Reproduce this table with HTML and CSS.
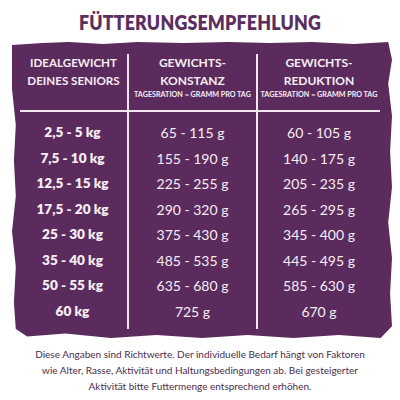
FILE: index.html
```html
<!DOCTYPE html>
<html lang="de">
<head>
  <meta charset="UTF-8">
  <title>Fütterungsempfehlung</title>
  <link rel="stylesheet" href="styles.css">
</head>
<body>
  <div class="page">
    <h1 class="title">FÜTTERUNGSEMPFEHLUNG</h1>

    <div class="panel">
      <div class="feed-table">
        <div class="head col-1">
          <span class="head-main">IDEALGEWICHT<br>DEINES SENIORS</span>
        </div>
        <div class="head col-2">
          <span class="head-main">GEWICHTS-<br>KONSTANZ</span>
          <span class="head-sub">TAGESRATION = GRAMM PRO TAG</span>
        </div>
        <div class="head col-3">
          <span class="head-main">GEWICHTS-<br>REDUKTION</span>
          <span class="head-sub">TAGESRATION = GRAMM PRO TAG</span>
        </div>

        <div class="col-1 body">
          <div class="cell weight">2,5 - 5 kg</div>
          <div class="cell weight">7,5 - 10 kg</div>
          <div class="cell weight">12,5 - 15 kg</div>
          <div class="cell weight">17,5 - 20 kg</div>
          <div class="cell weight">25 - 30 kg</div>
          <div class="cell weight">35 - 40 kg</div>
          <div class="cell weight">50 - 55 kg</div>
          <div class="cell weight">60 kg</div>
        </div>
        <div class="col-2 body">
          <div class="cell">65 - 115 g</div>
          <div class="cell">155 - 190 g</div>
          <div class="cell">225 - 255 g</div>
          <div class="cell">290 - 320 g</div>
          <div class="cell">375 - 430 g</div>
          <div class="cell">485 - 535 g</div>
          <div class="cell">635 - 680 g</div>
          <div class="cell">725 g</div>
        </div>
        <div class="col-3 body">
          <div class="cell">60 - 105 g</div>
          <div class="cell">140 - 175 g</div>
          <div class="cell">205 - 235 g</div>
          <div class="cell">265 - 295 g</div>
          <div class="cell">345 - 400 g</div>
          <div class="cell">445 - 495 g</div>
          <div class="cell">585 - 630 g</div>
          <div class="cell">670 g</div>
        </div>
      </div>
    </div>

    <p class="note">Diese Angaben sind Richtwerte. Der individuelle Bedarf hängt von Faktoren wie Alter, Rasse, Aktivität und Haltungsbedingungen ab. Bei gesteigerter Aktivität bitte Futtermenge entsprechend erhöhen.</p>
  </div>
</body>
</html>
```

FILE: styles.css
```css
body {
  margin: 0;
  background: #fff;
  font-family: Lato, "Open Sans", sans-serif;
}
.page {
  width: 400px;
  height: 400px;
  overflow: hidden;
}
.title {
  margin: 0;
  padding-top: 11px;
  height: 31px;
  font-size: 20px;
  font-weight: 800;
  letter-spacing: 0.2px;
  color: #5a2f5f;
  text-align: center;
  line-height: 22px;
  transform: scaleX(0.89);
}
.panel {
  margin: 0 8px 0 12px;
  height: 296px;
  padding: 12px 0 0 8px;
  box-sizing: border-box;
  background: #5c2b5e;
  clip-path: polygon(
    0 3px, 8% 1px, 15% 0, 24% 2px, 33% 0, 45% 1px, 57% 0, 68% 1px, 79% 0, 90% 2px, 99% 0,
    100% 6%, 99% 14%, 100% 25%, 99.5% 37%, 100% 49%, 99% 61%, 100% 73%, 99.5% 85%, 100% 96%,
    97% 100%, 86% 99%, 74% 100%, 62% 99%, 50% 100%, 38% 99%, 26% 100%, 14% 98.5%, 4% 99.5%, 1% 97%,
    0.5% 88%, 1% 76%, 0 64%, 1% 52%, 0.5% 40%, 1% 28%, 0 16%
  );
}
.feed-table {
  display: grid;
  grid-template-columns: 107px 129px 124px;
  grid-template-rows: 58px auto;
  color: #f6eef4;
}
.head {
  display: flex;
  flex-direction: column;
  align-items: center;
  border-bottom: 2px solid #efe6ee;
}
.head-main {
  font-size: 12px;
  font-weight: 700;
  line-height: 18px;
  text-align: center;
}
.col-1 .head-main {
  font-size: 11.6px;
}
.head-sub {
  font-size: 7.2px;
  font-weight: 700;
  line-height: 10px;
  white-space: nowrap;
}
.col-2, .col-3 {
  border-left: 2px solid #efe6ee;
}
.body {
  padding-top: 8px;
  padding-bottom: 5px;
}
.cell {
  height: 25.5px;
  line-height: 25.5px;
  text-align: center;
  font-size: 14px;
  font-weight: 400;
}
.weight {
  font-weight: 800;
  font-size: 13.6px;
  padding-right: 2px;
}
.note {
  margin: 8px 30px 0;
  font-size: 10px;
  line-height: 16px;
  color: #4b2d4d;
  text-align: center;
}
```
